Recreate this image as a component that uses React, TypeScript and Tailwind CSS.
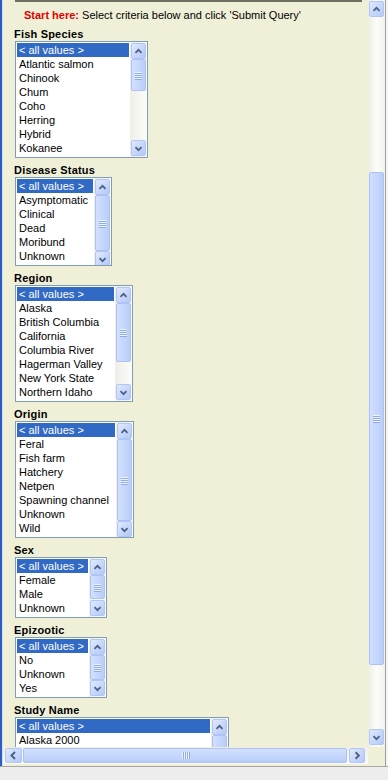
import React from 'react';

type Dir = 'up' | 'down' | 'left' | 'right';

const chevrons: Record<Dir, string> = {
  up: '4,9 7.5,5.5 11,9',
  down: '4,6 7.5,9.5 11,6',
  left: '9,4 5.5,7.5 9,11',
  right: '6,4 9.5,7.5 6,11',
};

const ScrollButton = ({ dir, className = '' }: { dir: Dir; className?: string }) => (
  <div
    className={`flex shrink-0 items-center justify-center rounded-[2px] border border-[#b1c6f4] bg-gradient-to-br from-[#e1eafe] via-[#c9d8fc] to-[#b4c9f7] ${className}`}
  >
    <svg width="15" height="15" viewBox="0 0 15 15">
      <polyline points={chevrons[dir]} fill="none" stroke="#4d6185" strokeWidth="2" />
    </svg>
  </div>
);

const Grip = ({ vertical }: { vertical: boolean }) => (
  <div className={`flex ${vertical ? 'flex-col' : 'flex-row'} gap-[1px]`}>
    {[0, 1, 2, 3].map((i) => (
      <div
        key={i}
        className={
          vertical
            ? 'h-[1px] w-[7px] bg-[#eef3fe] shadow-[0_1px_0_#8eabec]'
            : 'h-[7px] w-[1px] bg-[#eef3fe] shadow-[1px_0_0_#8eabec]'
        }
      />
    ))}
  </div>
);

const ListScroll = ({ thumb }: { thumb: number }) => (
  <div className="flex w-[17px] shrink-0 flex-col bg-gradient-to-r from-[#efeee8] to-[#fcfcfa] p-[1px]">
    <ScrollButton dir="up" className="h-[16px] w-full" />
    <div className="flex flex-1 flex-col">
      <div
        className="flex w-full items-center justify-center rounded-[2px] border border-[#acc2f3] bg-gradient-to-r from-[#d3e0fd] via-[#c6d7fd] to-[#b8cdf8]"
        style={{ height: thumb }}
      >
        {thumb > 18 && <Grip vertical />}
      </div>
    </div>
    <ScrollButton dir="down" className="h-[16px] w-full" />
  </div>
);

const ListBox = ({
  items,
  rows,
  width,
  thumb,
}: {
  items: string[];
  rows: number;
  width: number;
  thumb: number;
}) => (
  <div
    className="ml-[1px] flex overflow-hidden border border-[#7f9db9] bg-white"
    style={{ width, height: rows * 14 + 5 }}
  >
    <div className="flex-1 overflow-hidden p-[1px]">
      {items.map((item, i) => (
        <div
          key={item}
          className={`h-[14px] whitespace-nowrap pl-[2px] text-[11px] leading-[14px] ${
            i === 0 ? 'bg-[#316ac5] text-white' : 'text-black'
          }`}
        >
          {item}
        </div>
      ))}
    </div>
    <ListScroll thumb={thumb} />
  </div>
);

const sections = [
  {
    label: 'Fish Species',
    rows: 8,
    width: 133,
    thumb: 32,
    items: ['< all values >', 'Atlantic salmon', 'Chinook', 'Chum', 'Coho', 'Herring', 'Hybrid', 'Kokanee'],
  },
  {
    label: 'Disease Status',
    rows: 6,
    width: 97,
    thumb: 56,
    items: ['< all values >', 'Asymptomatic', 'Clinical', 'Dead', 'Moribund', 'Unknown'],
  },
  {
    label: 'Region',
    rows: 8,
    width: 118,
    thumb: 59,
    items: ['< all values >', 'Alaska', 'British Columbia', 'California', 'Columbia River', 'Hagerman Valley', 'New York State', 'Northern Idaho'],
  },
  {
    label: 'Origin',
    rows: 8,
    width: 119,
    thumb: 82,
    items: ['< all values >', 'Feral', 'Fish farm', 'Hatchery', 'Netpen', 'Spawning channel', 'Unknown', 'Wild'],
  },
  {
    label: 'Sex',
    rows: 4,
    width: 92,
    thumb: 24,
    items: ['< all values >', 'Female', 'Male', 'Unknown'],
  },
  {
    label: 'Epizootic',
    rows: 4,
    width: 92,
    thumb: 25,
    items: ['< all values >', 'No', 'Unknown', 'Yes'],
  },
  {
    label: 'Study Name',
    rows: 8,
    width: 214,
    thumb: 40,
    items: ['< all values >', 'Alaska 2000'],
  },
];

export default function App() {
  return (
    <div className="flex h-[780px] w-[388px] flex-col overflow-hidden bg-[#ededed] font-['Liberation_Sans',Arial,sans-serif]">
      <div className="flex h-[766px]">
        <div className="w-[2px] bg-[#2c5ec2]" />
        <div className="w-[1px] bg-[#d6dff2]" />

        {/* page viewport */}
        <div className="flex w-[365px] flex-col bg-[#f0f0d8]">
          <div className="h-[747px] overflow-hidden">
            <div className="ml-[12px] h-[2px] w-[347px] bg-[#6e6e60]" />
            <div className="mt-[6px] h-[14px] whitespace-nowrap pl-[21px] text-[11px] leading-[14px] text-black">
              <span className="font-bold text-[#dd0000]">Start here:</span> Select criteria below and click 'Submit Query'
            </div>
            <div className="pl-[11px]">
              {sections.map((s) => (
                <div key={s.label}>
                  <div className="mt-[5px] h-[14px] whitespace-nowrap text-[11px] font-bold leading-[14px] tracking-[0.2px] text-black">
                    {s.label}
                  </div>
                  <ListBox items={s.items} rows={s.rows} width={s.width} thumb={s.thumb} />
                </div>
              ))}
            </div>
          </div>

          {/* horizontal scrollbar */}
          <div className="flex h-[17px] items-center gap-[1px] bg-gradient-to-b from-[#efeee8] to-[#fcfcfa] pl-[2px] pr-[3px]">
            <ScrollButton dir="left" className="h-[15px] w-[17px]" />
            <div className="flex h-[15px] flex-1 items-center justify-center rounded-[2px] border border-[#acc2f3] bg-gradient-to-b from-[#d3e0fd] via-[#c6d7fd] to-[#b8cdf8]">
              <Grip vertical={false} />
            </div>
            <ScrollButton dir="right" className="ml-[1px] h-[15px] w-[16px]" />
          </div>
          <div className="h-[2px]" />
        </div>

        {/* vertical scrollbar */}
        <div className="flex w-[17px] flex-col">
          <div className="flex h-[747px] flex-col bg-gradient-to-r from-[#eeede5] via-[#fcfcfa] to-[#f3f2ed] px-[1px] pb-[2px] pt-[1px]">
            <ScrollButton dir="up" className="h-[16px] w-full" />
            <div className="flex flex-1 flex-col">
              <div className="mt-[155px] flex h-[493px] w-full items-center justify-center rounded-[2px] border border-[#acc2f3] bg-gradient-to-r from-[#d3e0fd] via-[#c6d7fd] to-[#b8cdf8]">
                <Grip vertical />
              </div>
            </div>
            <ScrollButton dir="down" className="h-[16px] w-full" />
          </div>
          <div className="flex-1 bg-[#f0f0d8]" />
        </div>

        <div className="w-[1px] bg-[#9c9c9c]" />
        <div className="w-[2px] bg-[#f6f6f6]" />
      </div>
      <div className="h-[1px] bg-[#a7a7a7]" />
      <div className="flex-1 bg-[#ededed]" />
    </div>
  );
}
